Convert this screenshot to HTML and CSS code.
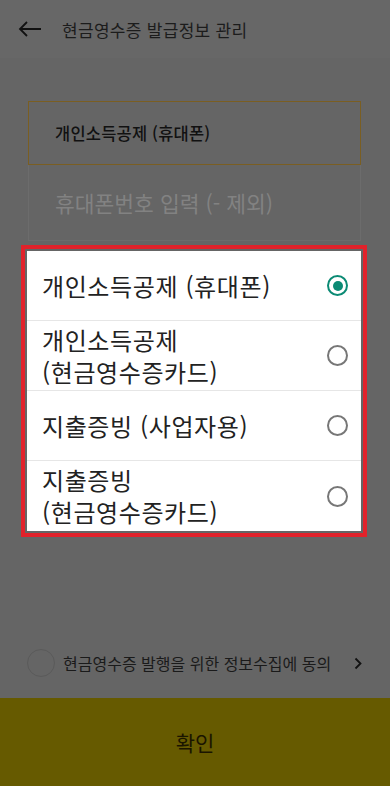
FILE: index.html
```html
<!DOCTYPE html>
<html lang="ko">
<head>
    <meta charset="UTF-8">
    <meta name="viewport" content="width=device-width, initial-scale=1.0">
    <title>현금영수증 발급정보 관리</title>
    <link rel="stylesheet" href="styles.css">
</head>
<body>
    <!-- Header -->
    <header class="header">
        <svg class="back" width="24" height="16" viewBox="0 0 24 16">
            <path d="M23 8H2M9 1L2 8l7 7" fill="none" stroke="#111" stroke-width="1.8"/>
        </svg>
        <h1>현금영수증 발급정보 관리</h1>
    </header>

    <div class="content">
        <div class="select">개인소득공제 (휴대폰)</div>
        <div class="field">휴대폰번호 입력 (- 제외)</div>
    </div>

    <div class="agree">
        <span class="check"></span>
        <span class="agree-text">현금영수증 발행을 위한 정보수집에 동의</span>
        <svg class="chev" width="8" height="13" viewBox="0 0 8 13">
            <path d="M1.5 1.5l5 5-5 5" fill="none" stroke="#111" stroke-width="1.8"/>
        </svg>
    </div>

    <button class="confirm">확인</button>

    <!-- Type picker dialog -->
    <div class="picker">
        <ul class="options">
            <li class="option"><span>개인소득공제 (휴대폰)</span><i class="radio on"></i></li>
            <li class="option"><span>개인소득공제<br>(현금영수증카드)</span><i class="radio"></i></li>
            <li class="option"><span>지출증빙 (사업자용)</span><i class="radio"></i></li>
            <li class="option"><span>지출증빙<br>(현금영수증카드)</span><i class="radio"></i></li>
        </ul>
    </div>
</body>
</html>
```

FILE: styles.css
```css
* {
    box-sizing: border-box;
}

body {
    font-family: 'Noto Sans CJK KR', 'Noto Sans', sans-serif;
    margin: 0;
    height: 100vh;
    background: #656565;
    color: #1a1a1a;
    display: flex;
    flex-direction: column;
    position: relative;
}

.header {
    height: 58px;
    background: #676767;
    display: flex;
    align-items: center;
    padding-left: 18px;
    gap: 20px;
}

.header h1 {
    margin: 0;
    font-size: 17px;
    letter-spacing: 0.3px;
    font-weight: 400;
    color: #1c1c1c;
}

.content {
    flex: 1;
    padding: 43px 29px 0 28px;
}

.select {
    height: 64px;
    border: 1px solid #7a5e22;
    display: flex;
    align-items: center;
    padding-left: 26px;
    font-size: 16.5px;
    letter-spacing: 0.2px;
    font-weight: 500;
    color: #111;
}

.field {
    height: 76px;
    border: 1px solid #6c6c6c;
    border-top: none;
    display: flex;
    align-items: center;
    padding-left: 26px;
    font-size: 21.5px;
    color: #828282;
}

.agree {
    display: flex;
    align-items: center;
    padding: 0 28px 0 27px;
    margin-bottom: 21px;
}

.check {
    width: 28px;
    height: 28px;
    border: 1px solid #5a5a5a;
    border-radius: 50%;
}

.agree-text {
    flex: 1;
    margin-left: 8px;
    font-size: 16px;
    color: #1a1a1a;
}

.confirm {
    height: 88px;
    width: 100%;
    border: none;
    background: #665a00;
    font-family: inherit;
    font-size: 21px;
    color: #1a1500;
}

.picker {
    position: absolute;
    left: 21px;
    top: 245px;
    width: 346px;
    height: 292px;
    border: 4px solid #e1222b;
    padding: 2px;
}

.options {
    list-style: none;
    margin: 0;
    padding: 0;
    background: #fff;
    height: 100%;
}

.option {
    height: 70px;
    display: flex;
    align-items: center;
    justify-content: space-between;
    padding: 0 13px 0 15px;
    font-size: 24px;
    letter-spacing: 0.6px;
    line-height: 32px;
    color: #222;
    border-bottom: 1px solid #e6e6e6;
}

.option:last-child {
    border-bottom: none;
}

.radio {
    width: 21px;
    height: 21px;
    border: 2px solid #777;
    border-radius: 50%;
    display: flex;
    align-items: center;
    justify-content: center;
}

.radio.on {
    border-color: #0b8a74;
}

.radio.on::after {
    content: "";
    width: 10px;
    height: 10px;
    border-radius: 50%;
    background: #0b8a74;
}
```
